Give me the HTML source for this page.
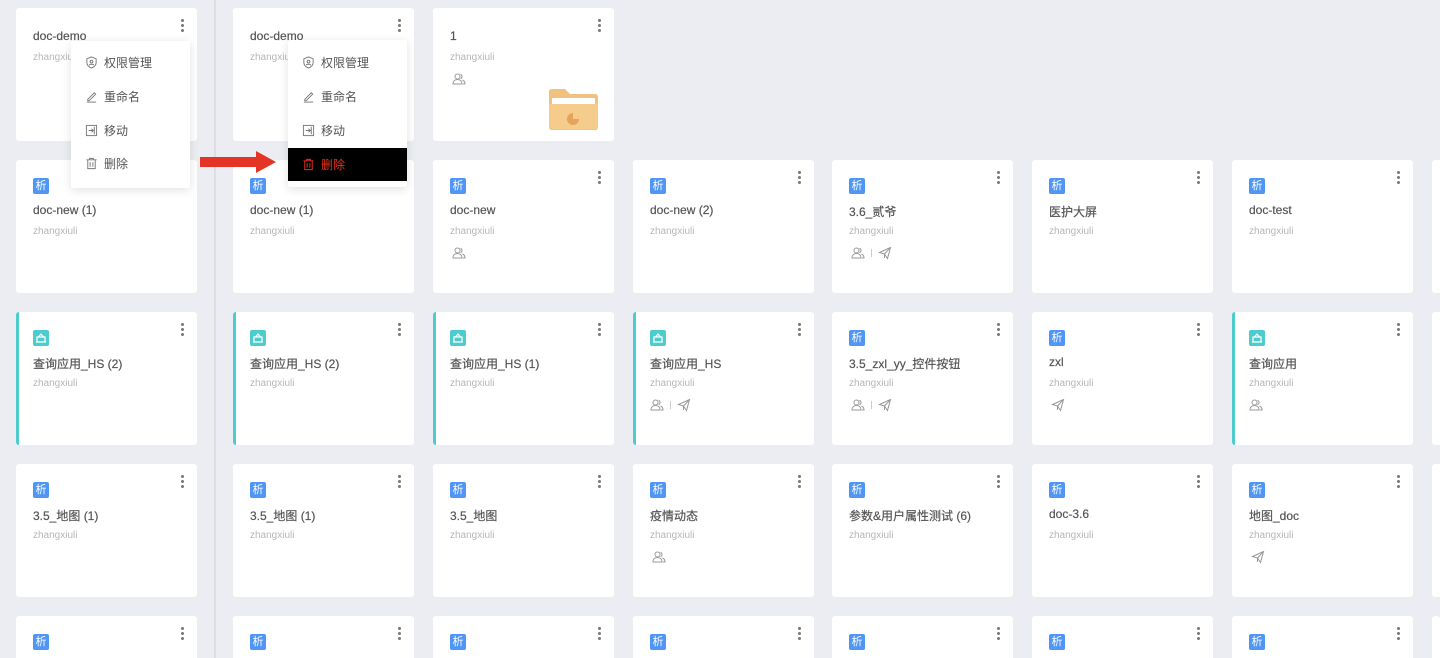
<!DOCTYPE html>
<html style="width:1440px;height:658px;overflow:hidden;background:#ebedf2"><head><meta charset="utf-8"><style>
*{margin:0;padding:0;box-sizing:border-box}
body{width:1440px;height:658px;overflow:hidden;background:#ebedf2;position:relative;font-family:"Liberation Sans","Noto Sans CJK SC",sans-serif}
.div{position:absolute;left:214px;top:0;width:2px;height:658px;background:#dcdee4}
.c{position:absolute;width:181px;height:133px;background:#fff;border-radius:3px;overflow:hidden}
.r5{height:42px;border-radius:3px 3px 0 0}
.q{border-left:3px solid #4ecbcc}
.ic{position:absolute;left:17px;top:18px;width:16px;height:16px;border-radius:2px;background:#4f96f7;color:#fff;font-size:11px;line-height:16px;text-align:center}
.q .ic{left:14px;background:#4ecbcc}
.t{position:absolute;left:17px;top:43px;font-size:12px;color:#555;white-space:nowrap;-webkit-text-stroke:0.2px #555}
.q .t,.q .s,.q .m{left:14px}
.s{position:absolute;left:17px;top:66px;font-size:10px;color:#b6b6b6}
.m{position:absolute;left:19px;top:86px;height:14px;display:flex;align-items:center;gap:6px}
.m i{display:block;width:1px;height:8px;background:#ccc}
.d{position:absolute;left:165px;top:11px;width:4px}
.d b{display:block;width:3px;height:3px;border-radius:50%;background:#777;margin-bottom:2px}
.q .d{left:162px}
.r1 .t{top:21px}.r1 .s{top:44px}.r1 .m{top:64px}
.menu{position:absolute;background:#fff;width:119px;height:147px;box-shadow:0 2px 10px rgba(0,0,0,.12);border-radius:2px}
.mi{position:absolute;left:0;width:100%;height:33px;font-size:12px;color:#555;display:flex;align-items:center;padding-left:14px;gap:6px}
.mi svg{width:13px;height:13px}
</style></head><body>
<svg width="0" height="0" style="position:absolute"><defs>
<symbol id="u" viewBox="0 0 14 14"><g fill="none" stroke="#999" stroke-width="1"><circle cx="5.5" cy="4.5" r="2.5"/><path d="M1 12c0-3 2-4.5 4.5-4.5S10 9 10 12z"/><path d="M8.5 2.2a2.5 2.5 0 010 4.6M10.5 8c1.5.6 2.5 2 2.5 4h-2"/></g></symbol>
<symbol id="p" viewBox="0 0 14 14"><g fill="none" stroke="#999" stroke-width="1"><path d="M1.5 6.5L12.5 1.5 9.5 12.5 6.5 8z"/><path d="M6.5 8l6-6.5M6.5 8v4"/></g></symbol>
<symbol id="h" viewBox="0 0 16 16"><g fill="none" stroke="#fff" stroke-width="1.2"><path d="M4 7h8v5H4zM5.5 7l2.5-3 2.5 3M3 12h10"/></g></symbol>
</defs></svg>
<div class="div"></div>

<div class="c r1" style="left:16px;top:8px"><div class="t">doc-demo</div><div class="s">zhangxiuli</div><div class="d"><b></b><b></b><b></b></div></div>
<div class="c r1" style="left:233px;top:8px"><div class="t">doc-demo</div><div class="s">zhangxiuli</div><div class="d"><b></b><b></b><b></b></div></div>
<div class="c r1" style="left:433px;top:8px"><div class="t">1</div><div class="s">zhangxiuli</div><div class="m"><svg width="14" height="14"><use href="#u"/></svg></div><div class="d"><b></b><b></b><b></b></div>
<svg style="position:absolute;left:114px;top:80px" width="53" height="44" viewBox="0 0 53 44"><path d="M2 4q0-3 3-3h13l5 5h25q3 0 3 3v30q0 3-3 3H5q-3 0-3-3z" fill="#f0c27e"/><rect x="5" y="10" width="43" height="12" rx="1" fill="#fff"/><path d="M2 16h49v22q0 3-3 3H5q-3 0-3-3z" fill="#f6cc8d"/><circle cx="26" cy="31" r="6" fill="#e6a35a"/><path d="M26 31v-6a6 6 0 016 6z" fill="#f6cc8d"/></svg></div>

<div class="c" style="left:16px;top:160px"><div class="ic">析</div><div class="t">doc-new (1)</div><div class="s">zhangxiuli</div><div class="d"><b></b><b></b><b></b></div></div>
<div class="c" style="left:233px;top:160px"><div class="ic">析</div><div class="t">doc-new (1)</div><div class="s">zhangxiuli</div><div class="d"><b></b><b></b><b></b></div></div>
<div class="c" style="left:433px;top:160px"><div class="ic">析</div><div class="t">doc-new</div><div class="s">zhangxiuli</div><div class="m"><svg width="14" height="14"><use href="#u"/></svg></div><div class="d"><b></b><b></b><b></b></div></div>
<div class="c" style="left:633px;top:160px"><div class="ic">析</div><div class="t">doc-new (2)</div><div class="s">zhangxiuli</div><div class="d"><b></b><b></b><b></b></div></div>
<div class="c" style="left:832px;top:160px"><div class="ic">析</div><div class="t">3.6_贰爷</div><div class="s">zhangxiuli</div><div class="m"><svg width="14" height="14"><use href="#u"/></svg><i></i><svg width="14" height="14"><use href="#p"/></svg></div><div class="d"><b></b><b></b><b></b></div></div>
<div class="c" style="left:1032px;top:160px"><div class="ic">析</div><div class="t">医护大屏</div><div class="s">zhangxiuli</div><div class="d"><b></b><b></b><b></b></div></div>
<div class="c" style="left:1232px;top:160px"><div class="ic">析</div><div class="t">doc-test</div><div class="s">zhangxiuli</div><div class="d"><b></b><b></b><b></b></div></div>
<div class="c" style="left:1432px;top:160px"></div>

<div class="c q" style="left:16px;top:312px"><div class="ic"><svg width="16" height="16"><use href="#h"/></svg></div><div class="t">查询应用_HS (2)</div><div class="s">zhangxiuli</div><div class="d"><b></b><b></b><b></b></div></div>
<div class="c q" style="left:233px;top:312px"><div class="ic"><svg width="16" height="16"><use href="#h"/></svg></div><div class="t">查询应用_HS (2)</div><div class="s">zhangxiuli</div><div class="d"><b></b><b></b><b></b></div></div>
<div class="c q" style="left:433px;top:312px"><div class="ic"><svg width="16" height="16"><use href="#h"/></svg></div><div class="t">查询应用_HS (1)</div><div class="s">zhangxiuli</div><div class="d"><b></b><b></b><b></b></div></div>
<div class="c q" style="left:633px;top:312px"><div class="ic"><svg width="16" height="16"><use href="#h"/></svg></div><div class="t">查询应用_HS</div><div class="s">zhangxiuli</div><div class="m"><svg width="14" height="14"><use href="#u"/></svg><i></i><svg width="14" height="14"><use href="#p"/></svg></div><div class="d"><b></b><b></b><b></b></div></div>
<div class="c" style="left:832px;top:312px"><div class="ic">析</div><div class="t">3.5_zxl_yy_控件按钮</div><div class="s">zhangxiuli</div><div class="m"><svg width="14" height="14"><use href="#u"/></svg><i></i><svg width="14" height="14"><use href="#p"/></svg></div><div class="d"><b></b><b></b><b></b></div></div>
<div class="c" style="left:1032px;top:312px"><div class="ic">析</div><div class="t">zxl</div><div class="s">zhangxiuli</div><div class="m"><svg width="14" height="14"><use href="#p"/></svg></div><div class="d"><b></b><b></b><b></b></div></div>
<div class="c q" style="left:1232px;top:312px"><div class="ic"><svg width="16" height="16"><use href="#h"/></svg></div><div class="t">查询应用</div><div class="s">zhangxiuli</div><div class="m"><svg width="14" height="14"><use href="#u"/></svg></div><div class="d"><b></b><b></b><b></b></div></div>
<div class="c" style="left:1432px;top:312px"></div>

<div class="c" style="left:16px;top:464px"><div class="ic">析</div><div class="t">3.5_地图 (1)</div><div class="s">zhangxiuli</div><div class="d"><b></b><b></b><b></b></div></div>
<div class="c" style="left:233px;top:464px"><div class="ic">析</div><div class="t">3.5_地图 (1)</div><div class="s">zhangxiuli</div><div class="d"><b></b><b></b><b></b></div></div>
<div class="c" style="left:433px;top:464px"><div class="ic">析</div><div class="t">3.5_地图</div><div class="s">zhangxiuli</div><div class="d"><b></b><b></b><b></b></div></div>
<div class="c" style="left:633px;top:464px"><div class="ic">析</div><div class="t">疫情动态</div><div class="s">zhangxiuli</div><div class="m"><svg width="14" height="14"><use href="#u"/></svg></div><div class="d"><b></b><b></b><b></b></div></div>
<div class="c" style="left:832px;top:464px"><div class="ic">析</div><div class="t">参数&amp;用户属性测试 (6)</div><div class="s">zhangxiuli</div><div class="d"><b></b><b></b><b></b></div></div>
<div class="c" style="left:1032px;top:464px"><div class="ic">析</div><div class="t">doc-3.6</div><div class="s">zhangxiuli</div><div class="d"><b></b><b></b><b></b></div></div>
<div class="c" style="left:1232px;top:464px"><div class="ic">析</div><div class="t">地图_doc</div><div class="s">zhangxiuli</div><div class="m"><svg width="14" height="14"><use href="#p"/></svg></div><div class="d"><b></b><b></b><b></b></div></div>
<div class="c" style="left:1432px;top:464px"></div>

<div class="c r5" style="left:16px;top:616px"><div class="ic">析</div><div class="d"><b></b><b></b><b></b></div></div>
<div class="c r5" style="left:233px;top:616px"><div class="ic">析</div><div class="d"><b></b><b></b><b></b></div></div>
<div class="c r5" style="left:433px;top:616px"><div class="ic">析</div><div class="d"><b></b><b></b><b></b></div></div>
<div class="c r5" style="left:633px;top:616px"><div class="ic">析</div><div class="d"><b></b><b></b><b></b></div></div>
<div class="c r5" style="left:832px;top:616px"><div class="ic">析</div><div class="d"><b></b><b></b><b></b></div></div>
<div class="c r5" style="left:1032px;top:616px"><div class="ic">析</div><div class="d"><b></b><b></b><b></b></div></div>
<div class="c r5" style="left:1232px;top:616px"><div class="ic">析</div><div class="d"><b></b><b></b><b></b></div></div>
<div class="c r5" style="left:1432px;top:616px;width:8px"></div>

<div class="menu" style="left:71px;top:41px">
<div class="mi" style="top:5px"><svg viewBox="0 0 14 14"><g fill="none" stroke="#777"><path d="M7 1l5 2v4c0 3-2.5 5-5 6-2.5-1-5-3-5-6V3z"/><circle cx="7" cy="6" r="1.5"/><path d="M4.5 10c.5-1.5 4.5-1.5 5 0"/></g></svg>权限管理</div>
<div class="mi" style="top:39px"><svg viewBox="0 0 14 14"><g fill="none" stroke="#777"><path d="M3 10l7-7 1.5 1.5-7 7H3z"/><path d="M2 13h10"/></g></svg>重命名</div>
<div class="mi" style="top:73px"><svg viewBox="0 0 14 14"><g fill="none" stroke="#777"><rect x="1.5" y="1.5" width="11" height="11"/><path d="M4 7h5M7 5l2 2-2 2M10 3v8"/></g></svg>移动</div>
<div class="mi" style="top:106px"><svg viewBox="0 0 14 14"><g fill="none" stroke="#777"><path d="M1.5 3h11M5 3V1.5h4V3M3 3v9.5h8V3M5.5 5.5v5M8.5 5.5v5"/></g></svg>删除</div>
</div>
<div class="menu" style="left:288px;top:40px">
<div class="mi" style="top:6px"><svg viewBox="0 0 14 14"><g fill="none" stroke="#777"><path d="M7 1l5 2v4c0 3-2.5 5-5 6-2.5-1-5-3-5-6V3z"/><circle cx="7" cy="6" r="1.5"/><path d="M4.5 10c.5-1.5 4.5-1.5 5 0"/></g></svg>权限管理</div>
<div class="mi" style="top:40px"><svg viewBox="0 0 14 14"><g fill="none" stroke="#777"><path d="M3 10l7-7 1.5 1.5-7 7H3z"/><path d="M2 13h10"/></g></svg>重命名</div>
<div class="mi" style="top:74px"><svg viewBox="0 0 14 14"><g fill="none" stroke="#777"><rect x="1.5" y="1.5" width="11" height="11"/><path d="M4 7h5M7 5l2 2-2 2M10 3v8"/></g></svg>移动</div>
<div class="mi" style="top:108px;background:#000;color:#e8321f"><svg viewBox="0 0 14 14"><g fill="none" stroke="#e8321f"><path d="M1.5 3h11M5 3V1.5h4V3M3 3v9.5h8V3M5.5 5.5v5M8.5 5.5v5"/></g></svg>删除</div>
</div>
<svg style="position:absolute;left:199px;top:150px" width="78" height="24" viewBox="0 0 78 24"><path d="M1 7h56V1l20 11-20 11v-6H1z" fill="#e33425"/></svg>
</body></html>
